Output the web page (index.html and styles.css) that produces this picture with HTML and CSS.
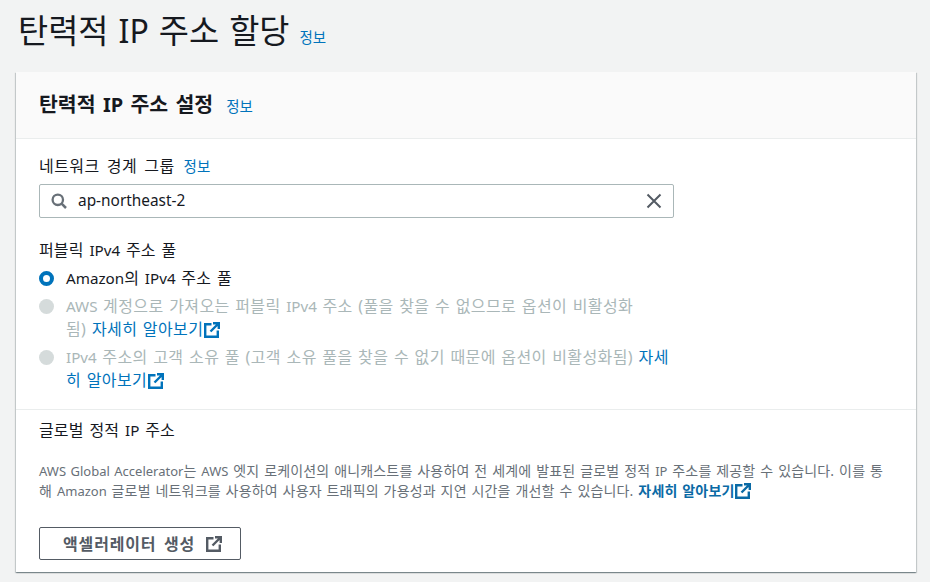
FILE: index.html
```html
<!DOCTYPE html>
<html lang="ko">
<head>
<meta charset="utf-8">
<title>탄력적 IP 주소 할당</title>
<link rel="stylesheet" href="styles.css">
</head>
<body>
<svg class="sprite" width="0" height="0" aria-hidden="true">
  <symbol id="ext" viewBox="0 0 16 16">
    <path d="M7.500 2.200H1.200v12.600h12.600V8.500" fill="none" stroke="currentColor" stroke-width="2.400"/>
    <path d="M9 1.200h5.800V7M14.500 1.500L6.500 9.500" fill="none" stroke="currentColor" stroke-width="2.400"/>
  </symbol>
</svg>
<header class="page-head">
  <h1 class="page-title">탄력적 <span class="lat">IP</span> 주소 할당</h1>
  <a class="info info-title">정보</a>
</header>
<main class="card">
  <div class="card-head">
    <h2 class="card-title">탄력적 <span class="lat">IP</span> 주소 설정</h2>
    <a class="info">정보</a>
  </div>
  <section class="section">
    <div class="label-row"><span class="label">네트워크 경계 그룹</span><a class="info">정보</a></div>
    <div class="search">
      <svg class="search-icon" viewBox="0 0 16 16"><circle cx="6.800" cy="6.800" r="5.200" fill="none" stroke="currentColor" stroke-width="2.300"/><path d="M10.600 10.600L15 15" fill="none" stroke="currentColor" stroke-width="2.500"/></svg>
      <span class="search-value">ap-northeast-2</span>
      <svg class="clear-icon" viewBox="0 0 16 16"><path d="M1.500 1.500l13 13M14.500 1.500l-13 13" fill="none" stroke="currentColor" stroke-width="2"/></svg>
    </div>
    <div class="label label-tight pool-label">퍼블릭 <span class="lat">IPv4</span> 주소 풀</div>
    <div class="radios">
      <div class="radio"><span class="dot dot-on"></span><span class="radio-text"><span class="lat">Amazon</span>의 <span class="lat">IPv4</span> 주소 풀</span></div>
      <div class="radio radio-off"><span class="dot"></span><span class="radio-text"><span class="lat">AWS</span> 계정으로 가져오는 퍼블릭 <span class="lat">IPv4</span> 주소 (풀을 찾을 수 없으므로 옵션이 비활성화<br>됨) <a class="link">자세히 알아보기<svg class="ext"><use href="#ext"/></svg></a></span></div>
      <div class="radio radio-off"><span class="dot"></span><span class="radio-text"><span class="lat">IPv4</span> 주소의 고객 소유 풀 (고객 소유 풀을 찾을 수 없기 때문에 옵션이 비활성화됨) <a class="link">자세<br>히 알아보기<svg class="ext"><use href="#ext"/></svg></a></span></div>
    </div>
  </section>
  <section class="section-global">
    <div class="label label-tight">글로벌 정적 <span class="lat">IP</span> 주소</div>
    <p class="desc"><span class="lat">AWS Global Accelerator</span>는 <span class="lat">AWS</span> 엣지 로케이션의 애니캐스트를 사용하여 전 세계에 발표된 글로벌 정적 <span class="lat">IP</span> 주소를 제공할 수 있습니다. 이를 통<br>해 <span class="lat">Amazon</span> 글로벌 네트워크를 사용하여 사용자 트래픽의 가용성과 지연 시간을 개선할 수 있습니다. <a class="link link-bold">자세히 알아보기<svg class="ext"><use href="#ext"/></svg></a></p>
    <button class="btn" type="button">액셀러레이터 생성<svg class="btn-ext"><use href="#ext"/></svg></button>
  </section>
</main>
</body>
</html>
```
FILE: styles.css
```css
* { box-sizing: border-box; }
html, body { margin: 0; height: 582px; overflow: hidden; }
body {
  background: #f2f3f3;
  color: #16191f;
  font-family: "Noto Sans", "Noto Sans CJK KR", sans-serif;
  font-size: 16px;
  letter-spacing: .45px;
  word-spacing: 2.500px;
  line-height: 22px;
  padding: 0 14px 0 16px;
}
.lat { font-size: 15.200px; letter-spacing: 0; }
.sprite { position: absolute; }
.page-head { display: flex; align-items: baseline; height: 72px; padding: 10px 0 0 2px; }
.page-title { margin: 0; font-size: 32.800px; line-height: 42px; font-weight: 400; letter-spacing: 0; word-spacing: 1.500px; }
.page-title .lat { font-size: 32px; }
.info { color: #0073bb; font-size: 14.500px; letter-spacing: 0; font-weight: 400; }
.info-title { margin-left: 10px; }
.card {
  background: #fff;
  height: 500px;
  box-shadow: 0 1px 1px rgba(0, 28, 36, .3), 1px 1px 1px rgba(0, 28, 36, .15), -1px 1px 1px rgba(0, 28, 36, .15);
}
.card-head {
  display: flex;
  align-items: baseline;
  height: 67px;
  padding: 19px 23px 0;
  background: #fafafa;
  border-bottom: 1px solid #eaeded;
}
.card-head .info { margin-left: 13px; }
.card-title { margin: 0; font-size: 20.500px; line-height: 26px; font-weight: 700; letter-spacing: 0; word-spacing: 2px; }
.card-title .lat { font-size: 20px; }
.section { padding: 16px 23px 0; height: 271px; border-bottom: 1px solid #eaeded; }
.label-row { display: flex; align-items: baseline; }
.label-row .info { margin-left: 9px; }
.label-tight { letter-spacing: .15px; word-spacing: 1.500px; }
.search {
  display: flex;
  align-items: center;
  width: 635px;
  height: 34px;
  margin-top: 7px;
  padding: 0 11px;
  background: #fff;
  border: 1px solid #aab7b8;
  border-radius: 2px;
}
.search-icon { width: 16px; height: 16px; color: #687078; flex: none; }
.search-value { flex: 1; margin-left: 11px; font-size: 15.400px; letter-spacing: 0; }
.clear-icon { width: 16px; height: 16px; color: #545b64; flex: none; }
.pool-label { margin-top: 21px; }
.radios { display: flex; flex-direction: column; gap: 5px; margin-top: 6px; }
.radio { display: flex; width: 635px; word-spacing: 1px; letter-spacing: .4px; }
.dot { flex: none; width: 15px; height: 15px; margin: 4px 12px 0 0; border-radius: 50%; background: #d5dbdb; }
.dot-on { background: #fff; border: 4.500px solid #0073bb; }
.radio-text { line-height: 23px; white-space: nowrap; }
.radio-off .radio-text { color: #aab7b8; }
.link { color: #0073bb; }
.ext { width: 16px; height: 16px; margin-left: 1px; vertical-align: -3px; }
.section-global { padding: 9px 23px 0; }
.desc { margin: 20px 0 0; font-size: 14px; letter-spacing: .15px; word-spacing: 1.100px; line-height: 20px; color: #687078; white-space: nowrap; }
.desc .lat { font-size: 13px; letter-spacing: 0; }
.link-bold { font-weight: 700; color: #0a6aa5; }
.btn {
  display: flex;
  align-items: center;
  width: 202px;
  height: 33px;
  margin-top: 26px;
  padding: 0 0 0 23px;
  background: #fff;
  border: 1px solid #545b64;
  border-radius: 2px;
  color: #545b64;
  font: 700 16px/22px "Noto Sans", "Noto Sans CJK KR", sans-serif;
  letter-spacing: .85px;
  word-spacing: 2.500px;
}
.btn-ext { width: 16px; height: 16px; margin-left: 11px; }
```
